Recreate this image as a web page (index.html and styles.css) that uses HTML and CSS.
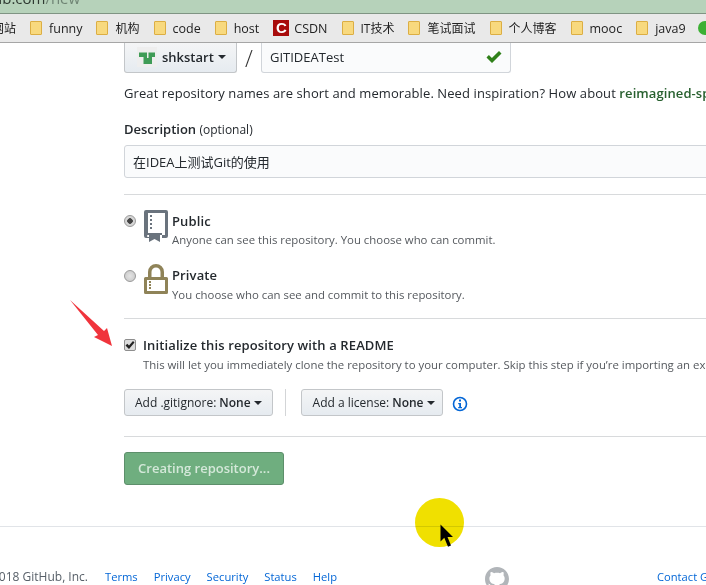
FILE: index.html
```html
<!DOCTYPE html>
<html lang="zh">
<head>
    <meta charset="UTF-8">
    <title>Create a New Repository</title>
    <link rel="stylesheet" href="styles.css">
</head>
<body>
    <div class="address-bar"><span class="url">ub.com<span class="url-path">/new</span></span></div>

    <div class="bookmarks">
        <span class="mark mark-first">网站</span>
        <span class="mark lat"><i class="folder"></i>funny</span>
        <span class="mark"><i class="folder"></i>机构</span>
        <span class="mark lat"><i class="folder"></i>code</span>
        <span class="mark lat"><i class="folder"></i>host</span>
        <span class="mark lat mark-csdn"><i class="csdn">C</i>CSDN</span>
        <span class="mark"><i class="folder"></i>IT技术</span>
        <span class="mark"><i class="folder"></i>笔试面试</span>
        <span class="mark"><i class="folder"></i>个人博客</span>
        <span class="mark lat"><i class="folder"></i>mooc</span>
        <span class="mark lat"><i class="folder"></i>java9</span>
        <i class="wechat"></i>
    </div>

    <div class="form">
        <div class="name-row">
            <div class="btn owner">
                <span class="avatar">
                    <svg width="20" height="20" viewBox="0 0 20 20"><path fill="#3f9c57" d="M2 5.500h8V11h1.500V5.500H18V10h-3v7H6.500v-7H2z"/></svg>
                </span>
                shkstart <i class="caret"></i>
            </div>
            <span class="slash">/</span>
            <div class="text-box name-box">
                GITIDEATest
                <svg class="ok" width="16" height="14" viewBox="0 0 16 14"><path fill="#2f8019" d="M0.5 7.5l2.4-2.4 3 3L13 1l2.5 2.4L6 13z"/></svg>
            </div>
        </div>
        <p class="hint">Great repository names are short and memorable. Need inspiration? How about <b>reimagined-spoon</b></p>

        <div class="label">Description <small>(optional)</small></div>
        <div class="text-box desc-box">在IDEA上测试Git的使用</div>

        <hr class="rule rule-top">

        <div class="choice choice-public">
            <input type="radio" name="vis" checked>
            <svg class="vis-icon" width="24" height="32" viewBox="0 0 24 32">
                <path fill="#6a737d" fill-rule="evenodd" d="M2 0h20a2 2 0 0 1 2 2v24a2 2 0 0 1-2 2h-4v-3h3V3H4v20h14v2H4a1 1 0 0 0 0 2h1v1H2a2 2 0 0 1-2-2V2a2 2 0 0 1 2-2z"/>
                <path fill="#6a737d" d="M5 24h11v8l-5.500-3L5 32zM6 5h2v2H6zM6 9h2v2H6zM6 13h2v2H6zM6 17h2v2H6z"/>
            </svg>
            <div>
                <div class="choice-title">Public</div>
                <div class="note">Anyone can see this repository. You choose who can commit.</div>
            </div>
        </div>

        <div class="choice choice-private">
            <input type="radio" name="vis">
            <svg class="vis-icon vis-lock" width="24" height="30" viewBox="0 0 24 30">
                <path fill="#8f8358" d="M4 13V8a8 8 0 0 1 16 0v5h-3.500V8a4.500 4.500 0 0 0-9 0v5z"/>
                <path fill="#8f8358" fill-rule="evenodd" d="M1.500 13h21a1.500 1.500 0 0 1 1.500 1.500v14a1.500 1.500 0 0 1-1.500 1.500h-21A1.500 1.500 0 0 1 0 28.500v-14A1.500 1.500 0 0 1 1.500 13zM3 16v11h18V16z"/>
                <path fill="#8f8358" d="M5 17h2v2H5zm0 3h2v2H5zm0 3h2v2H5z"/>
            </svg>
            <div>
                <div class="choice-title">Private</div>
                <div class="note">You choose who can see and commit to this repository.</div>
            </div>
        </div>

        <hr class="rule rule-mid">

        <div class="choice choice-readme">
            <span class="check"><svg width="10" height="10" viewBox="0 0 10 10"><path fill="#222" d="M0.500 5.500l1.800-1.800 1.700 1.700L8 1l1.500 1.500L4 9z"/></svg></span>
            <div>
                <div class="choice-title">Initialize this repository with a README</div>
                <div class="note">This will let you immediately clone the repository to your computer. Skip this step if you’re importing an existing repository.</div>
            </div>
        </div>

        <div class="add-row">
            <div class="btn small">Add .gitignore: <b>None</b> <i class="caret"></i></div>
            <span class="add-sep"></span>
            <div class="btn small license">Add a license: <b>None</b> <i class="caret"></i></div>
            <svg class="info" width="16" height="16" viewBox="0 0 16 16">
                <circle cx="8" cy="8" r="6.500" fill="none" stroke="#0366d6" stroke-width="1.600"/>
                <path fill="#0366d6" d="M7 3.500h2v2H7zM6.200 7h2.800v4h1v1.200H6.200V11h1V8.200h-1z"/>
            </svg>
        </div>

        <hr class="rule rule-end">

        <div class="create">Creating repository...</div>
    </div>

    <footer class="footer">
        <div class="footer-in">
            <span class="copy">2018 GitHub, Inc.</span>
            <a>Terms</a><a>Privacy</a><a>Security</a><a>Status</a><a>Help</a>
            <a class="contact">Contact GitHub</a>
        </div>
    </footer>

    <svg class="octo" width="24" height="24" viewBox="0 0 16 16">
        <path fill="#b1b5b9" d="M8 0C3.580 0 0 3.580 0 8c0 3.540 2.290 6.530 5.470 7.590.4.070.55-.17.55-.38 0-.19-.01-.82-.01-1.490-2.010.37-2.530-.49-2.690-.94-.09-.23-.48-.94-.82-1.130-.28-.15-.68-.52-.01-.53.63-.01 1.080.58 1.230.82.720 1.210 1.870.87 2.330.66.070-.52.280-.87.510-1.070-1.780-.2-3.640-.89-3.640-3.950 0-.87.310-1.590.820-2.150-.08-.2-.36-1.020.08-2.120 0 0 .67-.21 2.200.82.640-.18 1.320-.27 2-.27s1.360.09 2 .27c1.530-1.040 2.200-.82 2.200-.82.440 1.100.16 1.920.08 2.120.51.56.82 1.270.82 2.150 0 3.070-1.870 3.750-3.650 3.950.29.250.54.730.54 1.480 0 1.070-.01 1.930-.01 2.200 0 .21.150.46.550.38A8.010 8.010 0 0 0 16 8c0-4.420-3.580-8-8-8z"/>
    </svg>

    <svg class="arrow" width="46" height="50" viewBox="0 0 46 50">
        <path fill="#f0343c" d="M1 2L35 33L38 30L43 48L25 39L29 37z"/>
    </svg>
    <span class="spot"></span>
    <svg class="cursor" width="14" height="24" viewBox="0 0 14 24">
        <path fill="#000" d="M0.500 0.500v17l3.800-3.800 3.700 9 3-1.200-3.500-8.500h5.500z"/>
    </svg>
</body>
</html>
```

FILE: styles.css
```css
html, body {
    margin: 0;
    height: 585px;
    overflow: hidden;
}

body {
    position: relative;
    background: #fff;
    color: #24292e;
    font-family: "Open Sans", "Noto Sans CJK SC", sans-serif;
    font-size: 13px;
}

.address-bar {
    height: 13px;
    background: #b6d2ba;
    border-bottom: 1px solid #7f9483;
    overflow: hidden;
}

.url {
    display: block;
    margin-top: -13px;
    margin-left: -7px;
    font-size: 15px;
    line-height: 22px;
    color: #2f3a32;
}

.url-path {
    color: #6f8474;
}

.bookmarks {
    display: flex;
    align-items: center;
    gap: 14px;
    height: 28px;
    background: #e9e9e9;
    border-bottom: 1px solid #a6a6a6;
    white-space: nowrap;
    font-size: 12px;
    color: #222;
}

.mark {
    display: flex;
    align-items: center;
    gap: 7px;
}

.lat {
    font-size: 12.500px;
}

.mark-first {
    margin-left: -8px;
}

.mark-csdn {
    gap: 5px;
}

.folder {
    box-sizing: border-box;
    width: 12px;
    height: 14px;
    background: #f8d97e;
    border: 1px solid #dcae43;
    border-radius: 1px;
}

.csdn {
    width: 16px;
    height: 16px;
    background: #a80c0c;
    color: #fff;
    font: bold 15px/16px "Liberation Sans", sans-serif;
    text-align: center;
}

.wechat {
    width: 14px;
    height: 14px;
    margin-left: -2px;
    background: #3cb034;
    border-radius: 50%;
    flex: none;
}

.form {
    padding-left: 124px;
    white-space: nowrap;
}

.btn {
    display: inline-flex;
    align-items: center;
    box-sizing: border-box;
    background: linear-gradient(#f4f5f6, #e6ebf0);
    border: 1px solid #c3c6c9;
    border-radius: 3px;
    font-weight: 600;
    color: #24292e;
}

.caret {
    display: inline-block;
    width: 0;
    height: 0;
    margin-left: 4px;
    border: 4px solid transparent;
    border-top-color: #24292e;
    border-bottom: 0;
}

.name-row {
    display: flex;
    align-items: center;
    height: 30px;
}

.owner {
    width: 113px;
    height: 30px;
    padding-left: 12px;
    padding-bottom: 2px;
    border-top: 0;
    border-radius: 0 0 3px 3px;
}

.avatar {
    display: flex;
    width: 20px;
    height: 20px;
    margin-right: 5px;
    background: #eeeeee;
}

.slash {
    width: 24px;
    font-size: 23px;
    font-weight: 300;
    text-align: center;
    color: #333;
}

.text-box {
    box-sizing: border-box;
    background: #fafbfc;
    border: 1px solid #d1d5da;
    border-radius: 3px;
    display: flex;
    align-items: center;
    padding-left: 8px;
}

.name-box {
    width: 250px;
    height: 30px;
    padding-bottom: 2px;
    border-top: 0;
    border-radius: 0 0 3px 3px;
}

.ok {
    margin-left: auto;
    margin-right: 8px;
}

.hint {
    margin: 11px 0 0;
    line-height: 18px;
    letter-spacing: 0.090px;
}

.hint b {
    font-weight: 600;
    color: #28602f;
}

.label {
    margin-top: 18px;
    line-height: 18px;
    font-weight: 600;
}

.label small {
    font-size: 12px;
    font-weight: 400;
}

.desc-box {
    width: 620px;
    height: 33px;
    margin-top: 6px;
}

.rule {
    margin: 0;
    border: 0;
    border-top: 1px solid #d8dadc;
}

.rule-top {
    margin-top: 16px;
}

.rule-mid {
    margin-top: 14px;
}

.rule-end {
    margin-top: 20px;
}

.choice {
    display: flex;
    align-items: flex-start;
}

.choice input {
    appearance: none;
    box-sizing: border-box;
    width: 12px;
    height: 12px;
    margin: 5px 8px 0 0;
    flex: none;
    border: 1px solid #9a9a9a;
    border-radius: 50%;
    background: radial-gradient(#e4e4e4, #c6c6c6);
}

.choice input:checked {
    background: radial-gradient(#444 0 2.500px, #d6d6d6 3px);
}

.vis-icon {
    margin-right: 4px;
    flex: none;
}

.vis-lock {
    margin-top: -1px;
}

.choice-public {
    margin-top: 15px;
}

.choice-public .choice-title {
    padding-top: 1px;
    margin-bottom: -1px;
}

.choice-private {
    margin-top: 16px;
}

.choice-readme {
    margin-top: 16px;
}

.choice-title {
    font-weight: 600;
    line-height: 21px;
    letter-spacing: 0.120px;
    color: #24292e;
}

.note {
    font-size: 11.400px;
    line-height: 18px;
    color: #55595e;
}

.check {
    box-sizing: border-box;
    width: 12px;
    height: 12px;
    margin: 4px 7px 0 0;
    display: flex;
    align-items: center;
    justify-content: center;
    background: #dcdcdc;
    border: 1px solid #8e8e8e;
    border-radius: 2px;
    flex: none;
}

.add-row {
    display: flex;
    align-items: center;
    margin-top: 15px;
}

.small {
    height: 27px;
    padding: 0 10px;
    font-size: 12px;
    font-weight: 400;
    gap: 3px;
}

.small b {
    font-weight: 600;
}

.small .caret {
    margin-left: 0;
}

.license {
    width: 142px;
    padding: 0 0 0 11px;
}

.add-sep {
    width: 1px;
    height: 27px;
    margin: 0 15px 0 12px;
    background: #d3d5d7;
}

.info {
    margin-left: 9px;
    margin-top: 2px;
}

.create {
    box-sizing: border-box;
    width: 160px;
    height: 33px;
    margin-top: 15px;
    background: #6fae7f;
    border: 1px solid #5d8f6b;
    border-radius: 3px;
    color: #d4e8d9;
    font-weight: 600;
    line-height: 31px;
    text-align: center;
}

.footer {
    margin-top: 41px;
    border-top: 1px solid #e1e4e8;
    white-space: nowrap;
    font-size: 11.200px;
}

.footer-in {
    display: flex;
    gap: 16px;
    margin-top: 42px;
    margin-left: -8px;
    line-height: 16px;
    color: #586069;
}

.footer a {
    color: #0366d6;
}

.copy {
    margin-right: 1px;
    font-size: 12px;
}

.contact {
    margin-left: 304px;
}

/* things that sit on top of the page */
.octo {
    position: absolute;
    left: 485px;
    top: 567px;
}

.arrow {
    position: absolute;
    left: 69px;
    top: 298px;
}

.spot {
    position: absolute;
    left: 415px;
    top: 498px;
    width: 49px;
    height: 49px;
    border-radius: 50%;
    background: #f0e000;
    mix-blend-mode: multiply;
}

.cursor {
    position: absolute;
    left: 440px;
    top: 524px;
}
```
